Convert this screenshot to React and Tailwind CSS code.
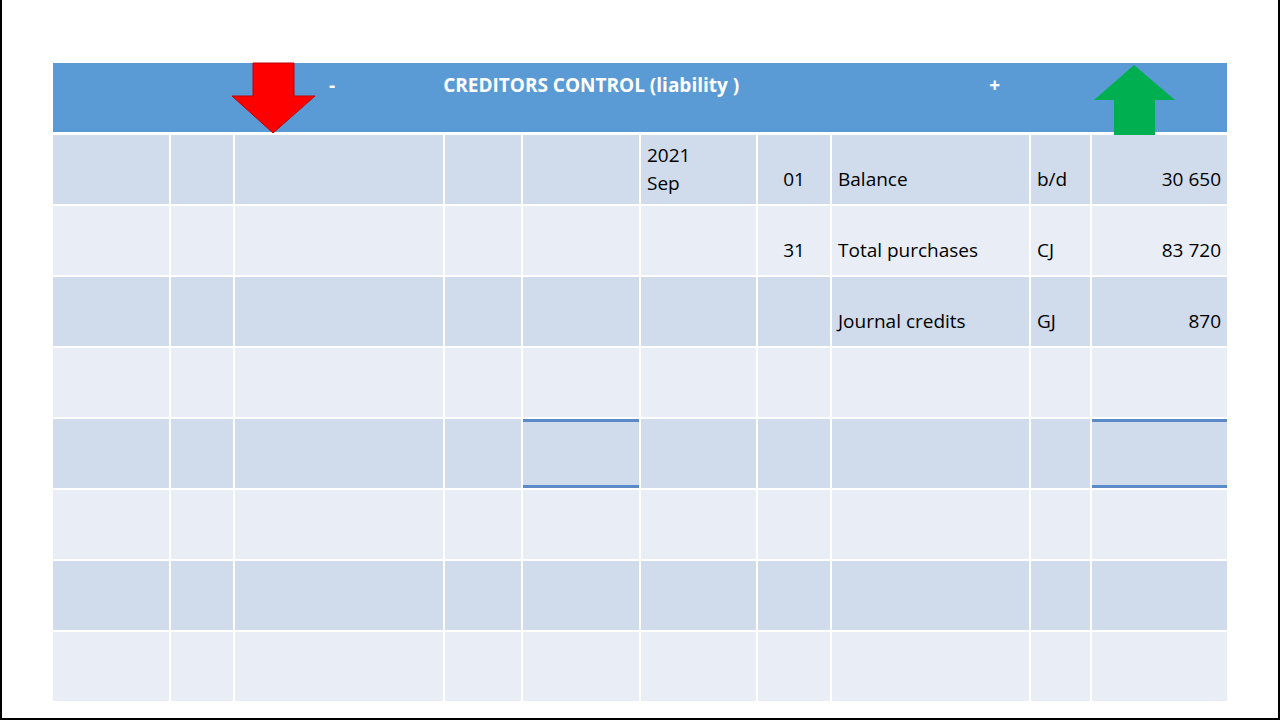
const rows = [
  ["", "", "", "", "", "2021\nSep", "01", "Balance", "b/d", "30 650"],
  ["", "", "", "", "", "", "31", "Total purchases", "CJ", "83 720"],
  ["", "", "", "", "", "", "", "Journal credits", "GJ", "870"],
  ["", "", "", "", "", "", "", "", "", ""],
  ["", "", "", "", "", "", "", "", "", ""],
  ["", "", "", "", "", "", "", "", "", ""],
  ["", "", "", "", "", "", "", "", "", ""],
  ["", "", "", "", "", "", "", "", "", ""],
];

export default function App() {
  return (
    <div className="w-[1280px] h-[720px] bg-white border-x-2 border-b-2 border-black relative overflow-hidden" style={{ fontFamily: "'Open Sans', 'Liberation Sans', sans-serif" }}>
      <div className="ml-[51px] mt-[63px] w-[1174px]">
        <div className="h-[69px] bg-[#5b9bd5] flex items-start pt-[8px] text-white font-bold text-[19px]">
          <span className="ml-[276px]">-</span>
          <span className="ml-[108px]">CREDITORS CONTROL (liability )</span>
          <span className="ml-[250px]">+</span>
        </div>
        <div className="mt-[3px] grid grid-cols-[116px_62px_208px_76px_116px_115px_72px_197px_59px_135px] auto-rows-[69px] gap-[2px] text-[19px] text-black">
          {rows.map((r, i) =>
            r.map((c, j) => {
              const bg = i % 2 === 0 ? "bg-[#d0dbeb]" : "bg-[#e9eef6]";
              const line = i === 4 && (j === 4 || j === 9) ? "border-y-[3px] border-[#5b8ac6]" : "";
              const align = j === 9 ? "justify-end pr-[6px]" : j === 6 ? "justify-center" : "pl-[6px]";
              const pt = j === 5 ? "items-start pt-[6px] leading-[28px] whitespace-pre" : "items-center pt-[20px]";
              return (
                <div key={i + "-" + j} className={`${bg} ${line} flex ${align} ${pt}`}>
                  {c}
                </div>
              );
            })
          )}
        </div>
      </div>
      <svg className="absolute left-[229px] top-[62px]" width="86" height="72" viewBox="0 0 86 72">
        <polygon points="22,1 63,1 63,34 84,34 42,71 1,34 22,34" fill="#ff0000" stroke="#c00000" strokeWidth="1" />
      </svg>
      <svg className="absolute left-[1091px] top-[64px]" width="84" height="72" viewBox="0 0 84 72">
        <polygon points="41,1 82,36 62,36 62,71 21,71 21,36 1,36" fill="#00b050" />
      </svg>
    </div>
  );
}
